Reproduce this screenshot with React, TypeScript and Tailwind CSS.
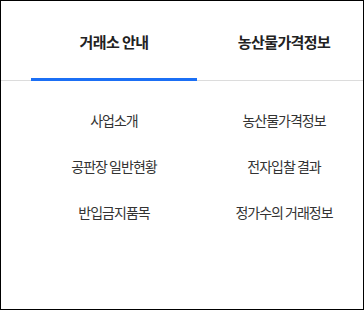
import React from "react";

const left = ["사업소개", "공판장 일반현황", "반입금지품목"];
const right = ["농산물가격정보", "전자입찰 결과", "정가수의 거래정보"];

export default function App() {
  return (
    <div
      className="w-[364px] h-[310px] border border-black bg-white"
      style={{ fontFamily: '"Noto Sans CJK KR", "Noto Sans", sans-serif' }}
    >
      <div className="flex pl-[30px] border-b border-[#dcdcdc]">
        <div className="relative w-[166px] h-[79px] flex items-center justify-center pt-[3px] text-[15px] font-bold text-[#222] tracking-[-0.6px]">
          거래소 안내
          <div className="absolute left-0 right-0 bottom-[-1px] h-[3px] bg-[#1b6ff5]" />
        </div>
        <div className="relative w-[166px] h-[79px] flex items-center justify-center pt-[3px] pl-[8px] text-[15px] font-bold text-[#222] tracking-[-0.6px]">
          농산물가격정보
        </div>
      </div>
      <div className="flex pl-[30px] pt-[16px]">
        <div className="w-[166px] flex flex-col">
          {left.map((t) => (
            <div key={t} className="h-[46px] flex items-center justify-center text-[14px] text-[#333] tracking-[-1px]">
              {t}
            </div>
          ))}
        </div>
        <div className="w-[166px] flex flex-col pl-[8px]">
          {right.map((t) => (
            <div key={t} className="h-[46px] flex items-center justify-center text-[14px] text-[#333] tracking-[-1px]">
              {t}
            </div>
          ))}
        </div>
      </div>
    </div>
  );
}
